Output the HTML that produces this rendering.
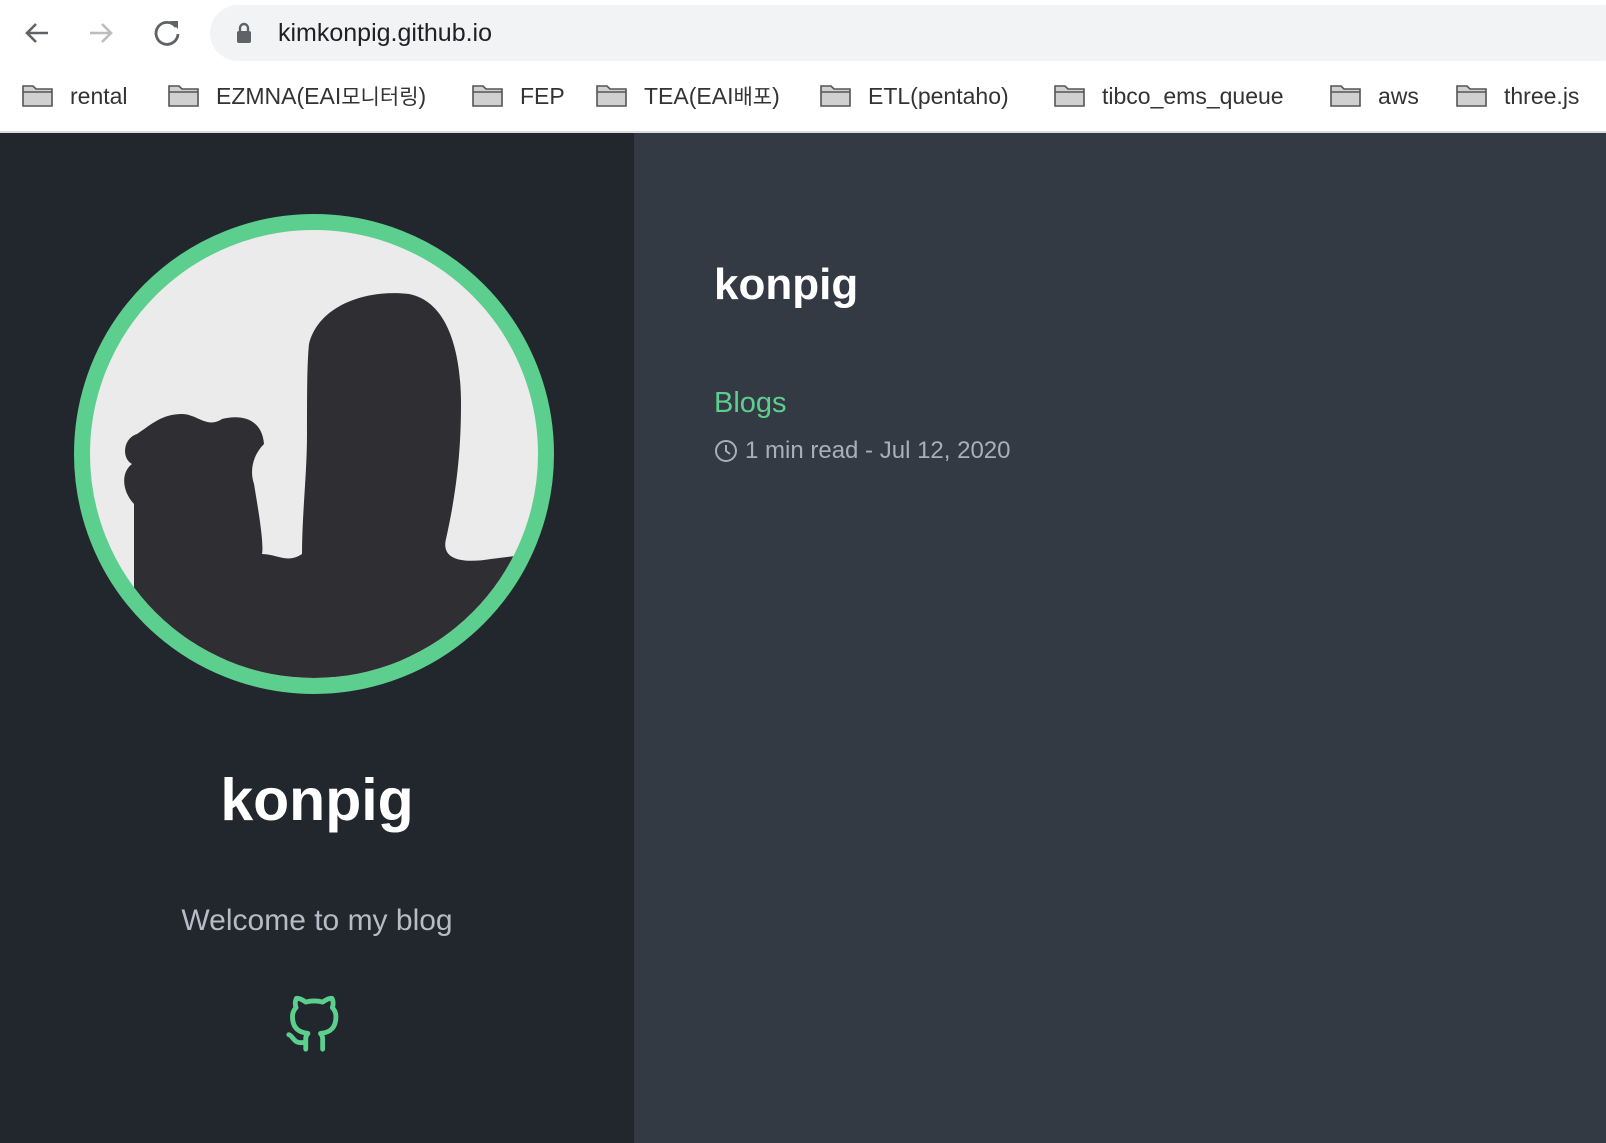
<!DOCTYPE html>
<html><head><meta charset="utf-8"><style>
*{margin:0;padding:0;box-sizing:border-box}
body{width:1606px;height:1143px;overflow:hidden;background:#343a43;font-family:"Liberation Sans","Noto Sans CJK KR",sans-serif;position:relative}
.top{position:absolute;left:0;top:0;width:1606px;height:133px;background:#fff;border-bottom:2px solid #dcdcdc}
.url{position:absolute;left:210px;top:5px;width:1420px;height:56px;border-radius:28px;background:#f1f3f4}
.url span{position:absolute;left:68px;top:14px;font-size:25px;line-height:28px;color:#202124}
.bm{position:absolute;top:83px;height:26px;line-height:26px;font-size:23px;color:#333;white-space:nowrap}
.bm b{font-weight:normal;font-family:"Noto Sans CJK KR",sans-serif;font-size:21px;line-height:26px;display:inline-block;vertical-align:top}
.fi{position:absolute;top:84px;width:31px;height:23px}
.side{position:absolute;left:0;top:133px;width:634px;height:1010px;background:#22272e}
.t{position:absolute;color:#fff;font-weight:bold}
</style></head><body>
<div class="top">
<svg style="position:absolute;left:22px;top:18px" width="30" height="30" viewBox="0 0 30 30"><path d="M26 15H5M14 6l-9 9 9 9" stroke="#5f6368" stroke-width="2.6" fill="none"/></svg>
<svg style="position:absolute;left:86px;top:18px" width="30" height="30" viewBox="0 0 30 30"><path d="M4 15h21M16 6l9 9-9 9" stroke="#bdbdbd" stroke-width="2.6" fill="none"/></svg>
<svg style="position:absolute;left:151px;top:17px" width="32" height="32" viewBox="0 0 32 32"><path d="M25 10A11 11 0 1 0 27 17" stroke="#5f6368" stroke-width="2.8" fill="none"/><path d="M19 4h8v8z" fill="#5f6368"/></svg>
<div class="url"><svg style="position:absolute;left:26px;top:17px" width="16" height="22" viewBox="0 0 16 22"><path d="M4 9V6a4 4 0 0 1 8 0v3" stroke="#5f6368" stroke-width="2.4" fill="none"/><rect x="1" y="9" width="14" height="12" rx="2" fill="#5f6368"/></svg><span>kimkonpig.github.io</span></div>
</div>
<svg width="0" height="0" style="position:absolute"><defs><g id="f"><path d="M1 2h10l3 3h16v17H1z" fill="#d0d0d0" stroke="#555" stroke-width="1.6"/><path d="M1 8h29" stroke="#555" stroke-width="1.4"/></g></defs></svg>
<svg class="fi" style="left:22px"><use href="#f"/></svg><div class="bm" style="left:70px">rental</div>
<svg class="fi" style="left:168px"><use href="#f"/></svg><div class="bm" style="left:216px">EZMNA(EAI<b>모니터링</b>)</div>
<svg class="fi" style="left:472px"><use href="#f"/></svg><div class="bm" style="left:520px">FEP</div>
<svg class="fi" style="left:596px"><use href="#f"/></svg><div class="bm" style="left:644px">TEA(EAI<b>배포</b>)</div>
<svg class="fi" style="left:820px"><use href="#f"/></svg><div class="bm" style="left:868px">ETL(pentaho)</div>
<svg class="fi" style="left:1054px"><use href="#f"/></svg><div class="bm" style="left:1102px">tibco_ems_queue</div>
<svg class="fi" style="left:1330px"><use href="#f"/></svg><div class="bm" style="left:1378px">aws</div>
<svg class="fi" style="left:1456px"><use href="#f"/></svg><div class="bm" style="left:1504px">three.js</div>
<div class="side">
<svg style="position:absolute;left:74px;top:81px" width="480" height="480" viewBox="0 0 480 480">
<defs><clipPath id="c"><circle cx="240" cy="240" r="224"/></clipPath></defs>
<circle cx="240" cy="240" r="232" fill="#ebebeb" stroke="#5ccf8e" stroke-width="16"/>
<g clip-path="url(#c)" fill="#2f2f33">
<path d="M235 130c10-40 60-55 100-50 40 8 52 60 52 110 0 50-5 90-15 135-5 20 15 25 45 20l40-5 10 60-60 150H60L60 290c-10-10-15-30-2-40-10-5-10-25 5-30 15-10 25-20 45-20 15 0 25 15 40 5 20-5 40 0 42 25-10 10-15 25-10 40 5 30 10 60 8 70 15 0 25 10 40 0 0-40 5-80 5-120 0-40 0-70 2-90z"/>
</g></svg>
<div class="t" style="left:0;width:634px;text-align:center;top:633px;font-size:59px">konpig</div>
<div style="position:absolute;left:0;width:634px;text-align:center;top:771px;font-size:30px;color:#b6bcc6">Welcome to my blog</div>
<svg style="position:absolute;left:284px;top:862px" width="58" height="60" viewBox="0 0 24 24" fill="none" stroke="#5ccf8e" stroke-width="2" stroke-linecap="round" stroke-linejoin="round"><path d="M9 19c-5 1.5-5-2.5-7-3m14 6v-3.9a3.4 3.4 0 0 0-.9-2.6c3.1-.3 6.4-1.5 6.4-7A5.4 5.4 0 0 0 20 4.8 5.1 5.1 0 0 0 19.9 1S18.7.6 16 2.5a13.4 13.4 0 0 0-7 0C6.3.6 5.1 1 5.1 1A5.1 5.1 0 0 0 5 4.8a5.4 5.4 0 0 0-1.5 3.7c0 5.4 3.3 6.6 6.4 7a3.4 3.4 0 0 0-.9 2.6V22"/></svg>
</div>
<div class="t" style="left:714px;top:260px;font-size:44px">konpig</div>
<div style="position:absolute;left:714px;top:387px;font-size:29px;color:#5ccf8e">Blogs</div>
<svg style="position:absolute;left:714px;top:439px" width="24" height="24" viewBox="0 0 24 24" fill="none" stroke="#a8afba" stroke-width="2"><circle cx="12" cy="12" r="10"/><path d="M12 6v6l4 3"/></svg>
<div style="position:absolute;left:745px;top:437px;font-size:24px;color:#a8afba">1 min read - Jul 12, 2020</div>
</body></html>
